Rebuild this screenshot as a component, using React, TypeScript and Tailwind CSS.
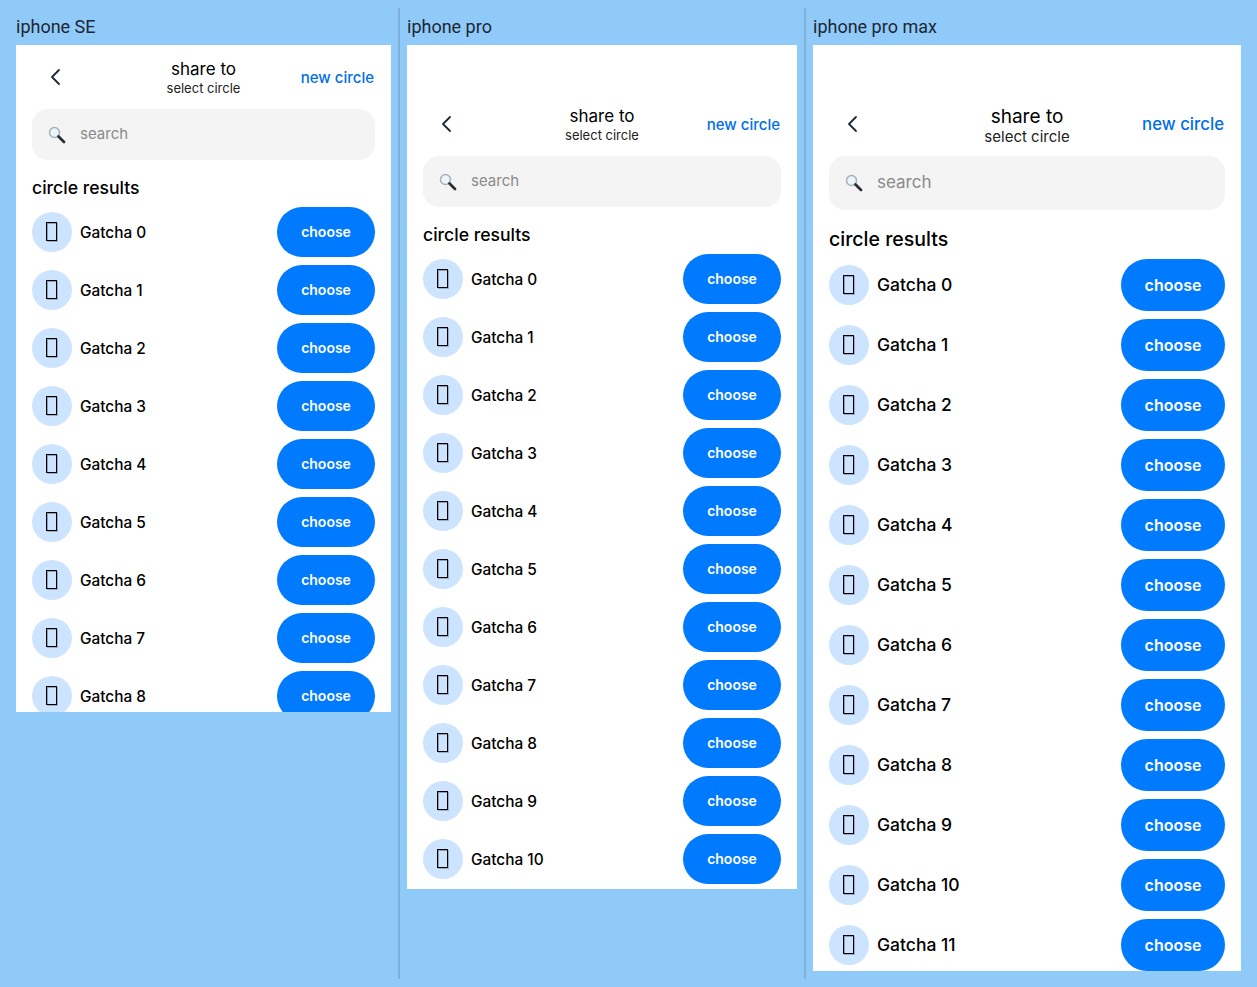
const font = "[font-family:Inter,'Noto_Sans',sans-serif]"

type Size = {
  label: string
  frame: string
  statusBar: boolean
  big: boolean
  rows: number
}

const devices: Size[] = [
  { label: "iphone SE", frame: "w-[375px] h-[667px]", statusBar: false, big: false, rows: 9 },
  { label: "iphone pro", frame: "w-[390px] h-[844px]", statusBar: true, big: false, rows: 11 },
  { label: "iphone pro max", frame: "w-[428px] h-[926px]", statusBar: true, big: true, rows: 12 },
]

function Magnifier() {
  return (
    <svg width="18" height="18" viewBox="0 0 18 18" className="shrink-0">
      <circle cx="6.5" cy="6.5" r="5" fill="#eef5fa" stroke="#a4b2bc" strokeWidth="1.5" />
      <path d="M10.5 10.5l5.5 5.5" stroke="#2b3034" strokeWidth="2.8" strokeLinecap="round" />
    </svg>
  )
}

function Row({ n, big }: { n: number; big: boolean }) {
  return (
    <div className={`flex items-center justify-between ${big ? "h-[52px]" : "h-[50px]"}`}>
      <div className="flex items-center gap-2">
        <div className="w-10 h-10 rounded-full bg-[#cce4ff] flex items-center justify-center pb-[2px] pr-[1px]">
          <div className="w-[11px] h-[19px] border border-black shadow-[inset_1px_1px_0_rgba(0,0,0,0.3),1px_1px_0_rgba(0,0,0,0.25)]" />
        </div>
        <span className={`${font} text-black font-medium ${big ? "text-[17.5px]" : "text-[15.4px] pt-[2px]"}`}>Gatcha {n}</span>
      </div>
      <button
        className={`${font} bg-[#007aff] text-white font-semibold rounded-full ${big ? "w-[104px] h-[52px] text-[16px]" : "w-[98px] h-[50px] text-[14px] pb-[2px]"}`}
      >
        choose
      </button>
    </div>
  )
}

function Phone({ d }: { d: Size }) {
  return (
    <div className="flex flex-col">
      <div className="h-[37px] flex items-end pb-[6px] font-['Roboto',sans-serif] text-[18px] leading-[24px] text-[#1c2733]">{d.label}</div>
      <div className={`${d.frame} bg-white overflow-hidden flex flex-col px-4`}>
        {d.statusBar && <div className="h-[47px] shrink-0" />}
        <div className="h-[64px] shrink-0 flex items-center relative">
          <svg width="24" height="24" viewBox="0 0 24 24" fill="none" className="absolute left-[12px] top-[20px]">
            <path d="M15 5l-7 7 7 7" stroke="#1f2937" strokeWidth="1.8" strokeLinecap="round" strokeLinejoin="round" />
          </svg>
          <div className={`w-full flex flex-col items-center ${d.big ? "pt-[3px]" : ""}`}>
            <span className={`${font} text-black leading-[22px] ${d.big ? "text-[19px]" : "text-[17px]"}`}>share to</span>
            <span className={`${font} text-[#222] leading-[16px] ${d.big ? "text-[15px] mt-[1px]" : "text-[13px]"}`}>select circle</span>
          </div>
          <span className={`${font} absolute right-[1px] font-medium text-[#006fe6] ${d.big ? "text-[16.8px] top-[20px]" : "text-[15px] top-[22px]"}`}>new circle</span>
        </div>
        <div className={`shrink-0 bg-[#f4f4f4] rounded-2xl flex items-center pl-[16px] gap-[14px] ${d.big ? "h-[54px]" : "h-[51px]"}`}>
          <Magnifier />
          <span className={`${font} text-[#8a8a8a] ${d.big ? "text-[17px]" : "text-[15px]"}`}>search</span>
        </div>
        <div className={`${font} shrink-0 text-black font-medium ${d.big ? "text-[19.5px] mt-[15px] mb-[6px] leading-[28px]" : "text-[17.6px] mt-[16px] mb-[7px] leading-[24px]"}`}>
          circle results
        </div>
        <div className="flex flex-col gap-2">
          {Array.from({ length: d.rows }, (_, i) => (
            <Row key={i} n={i} big={d.big} />
          ))}
        </div>
      </div>
    </div>
  )
}

export default function App() {
  return (
    <div className="w-[1257px] h-[987px] bg-[#90caf9] overflow-hidden pl-4 pt-[8px] flex">
      <Phone d={devices[0]} />
      <div className="w-[2px] h-[971px] bg-[#7fb0da] ml-[7px] mr-[7px]" />
      <Phone d={devices[1]} />
      <div className="w-[2px] h-[971px] bg-[#7fb0da] ml-[7px] mr-[7px]" />
      <Phone d={devices[2]} />
    </div>
  )
}
